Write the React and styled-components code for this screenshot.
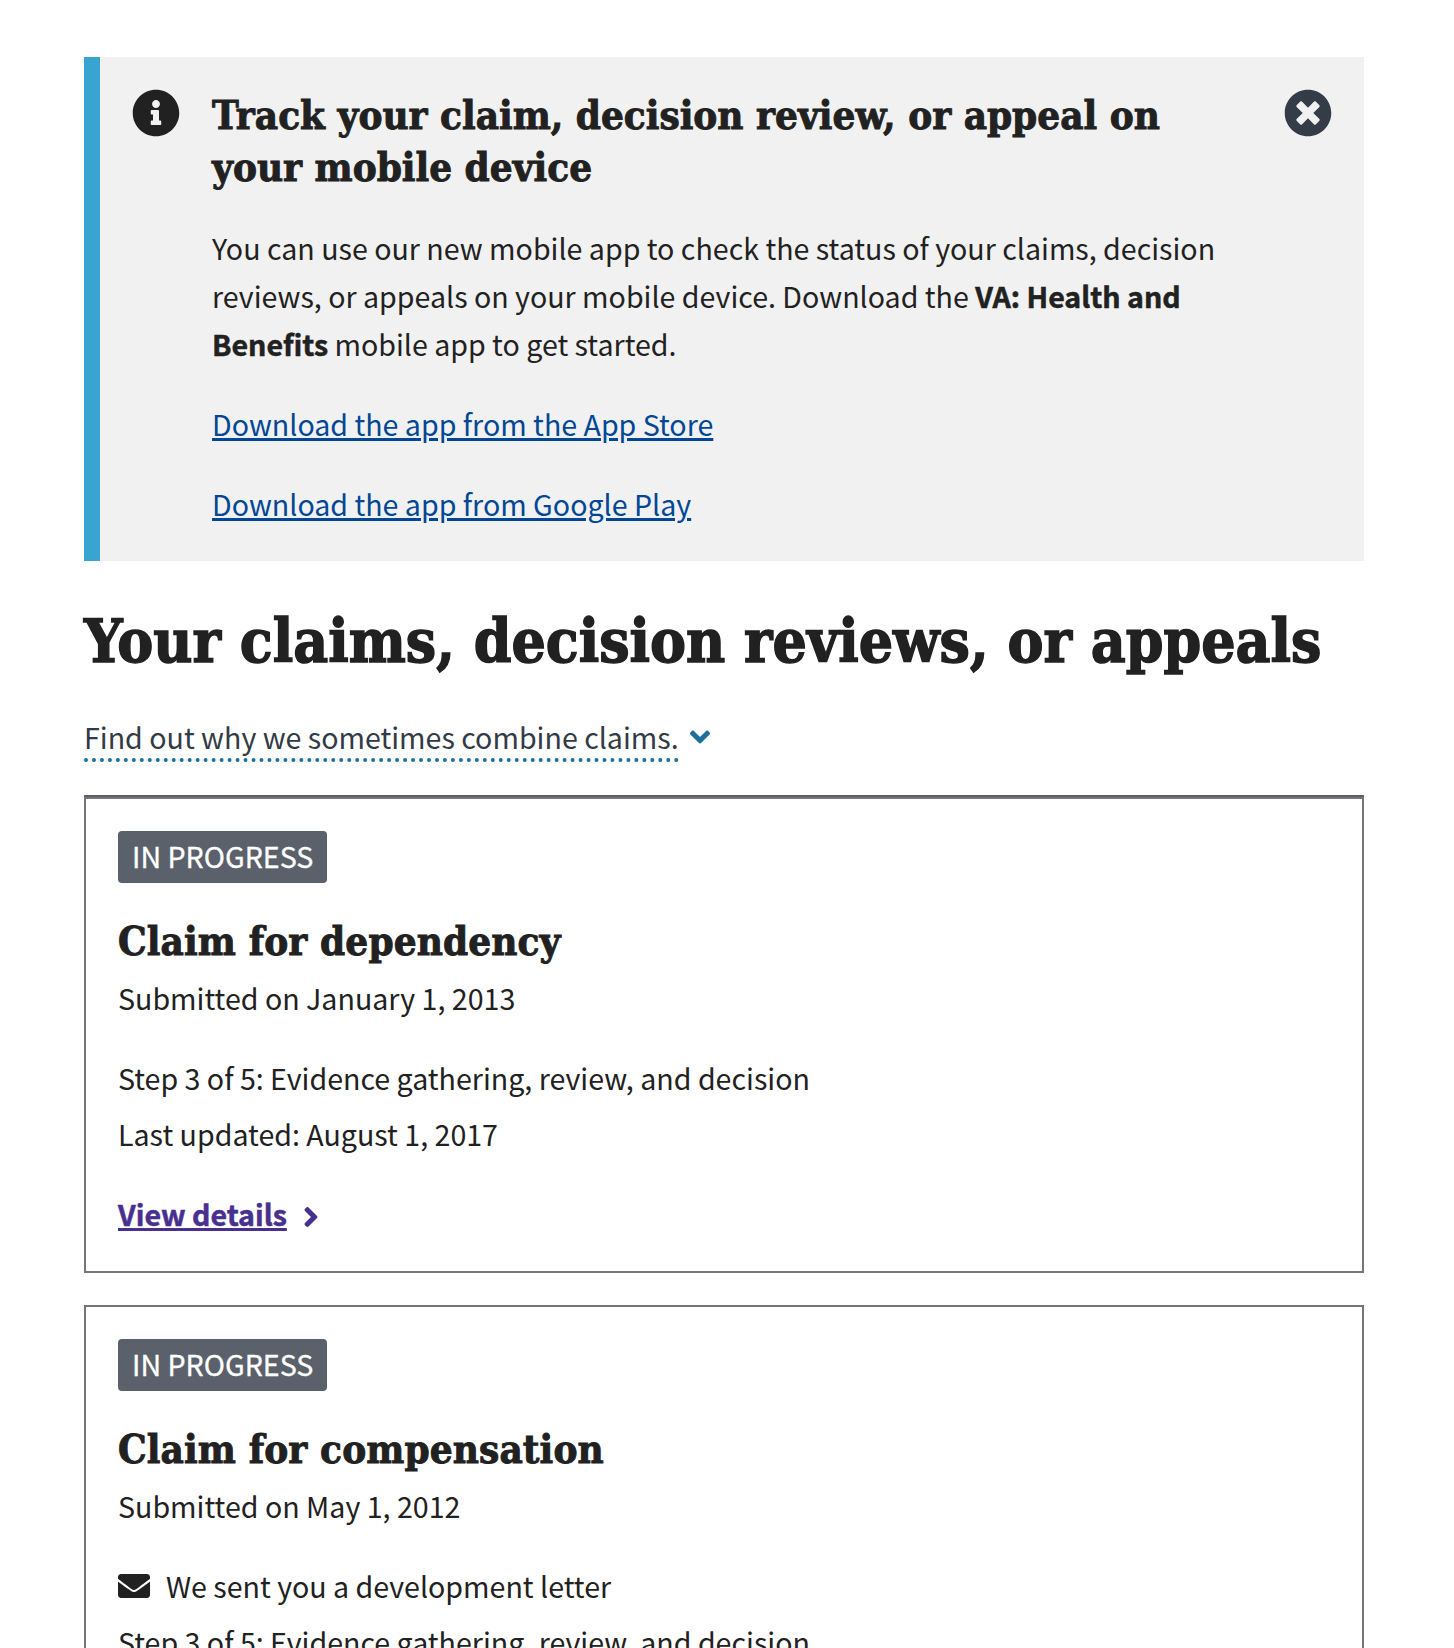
import React from "react";
import styled, { createGlobalStyle } from "styled-components";
import {
  FaInfoCircle,
  FaTimesCircle,
  FaAngleDown,
  FaAngleRight,
  FaEnvelope,
} from "react-icons/fa";

const GlobalStyle = createGlobalStyle`
  *, *::before, *::after { box-sizing: border-box; }
  body {
    margin: 0;
    background: #fff;
    color: #212121;
    font-family: "Noto Sans CJK SC", "Open Sans", sans-serif;
    font-size: 28.6px;
    line-height: 48px;
  }
  h1, h2, h3, p { margin: 0; }
  b { -webkit-text-stroke: 0.5px currentColor; }
`;

const Page = styled.main`
  height: 1648px;
  overflow: hidden;
  padding: 57px 90px 0 84px;
`;

const Title = styled.h1`
  margin-top: 41px;
  font: 700 60px/78px "DejaVu Serif Condensed", "DejaVu Serif", serif;
  font-stretch: condensed;
  -webkit-text-stroke: 1.4px currentColor;
  white-space: nowrap;
`;

const Subtitle = styled.h2`
  font: 700 40px/52px "DejaVu Serif Condensed", "DejaVu Serif", serif;
  font-stretch: condensed;
  -webkit-text-stroke: 0.9px currentColor;
`;

const Alert = styled.section`
  display: flex;
  gap: 32px;
  height: 504px;
  padding: 32px;
  border-left: 16px solid #38a4d0;
  background: #f1f1f1;
`;

const InfoIcon = styled(FaInfoCircle)`
  flex: none;
  width: 48px;
  height: 48px;
  margin-top: -0.5px;
`;

const AlertBody = styled.div`
  flex: 1;
  display: flex;
  flex-direction: column;
  align-items: flex-start;
  gap: 32px;

  ${Subtitle} {
    margin-bottom: -1px;
  }
`;

const CloseButton = styled.button`
  flex: none;
  width: 48px;
  height: 48px;
  margin-top: -0.5px;
  margin-left: 8px;
  padding: 0;
  border: 0;
  background: none;
  color: #343c47;
  cursor: pointer;

  svg {
    display: block;
    width: 48px;
    height: 48px;
  }
`;

const Link = styled.a`
  color: #004795;
  text-decoration: underline;
  text-decoration-thickness: 3px;
  text-underline-offset: 2px;
`;

const Expander = styled.button`
  display: flex;
  align-items: flex-start;
  gap: 11px;
  margin-top: 34px;
  padding: 0;
  border: 0;
  background: none;
  font: inherit;
  color: #323a45;
  cursor: pointer;
`;

const ExpanderLabel = styled.span`
  height: 48px;
  padding-top: 1px;
  line-height: 43px;
  border-bottom: 4px dotted #1d6f9c;
`;

const ExpanderIcon = styled(FaAngleDown)`
  width: 20px;
  height: 32px;
  margin-top: 7px;
  color: #1d6f9c;
`;

const Divider = styled.hr`
  height: 2px;
  margin: 33px 0 0;
  border: 0;
  background: #5c5e6a;
`;

const CardList = styled.div`
  display: flex;
  flex-direction: column;
  gap: 32px;
`;

const Card = styled.article`
  display: flex;
  flex-direction: column;
  align-items: flex-start;
  padding: 32px 32px 33px;
  border: 2px solid #757575;
`;

const Badge = styled.span`
  height: 52px;
  margin-bottom: 32px;
  padding: 1px 14px 0;
  border-radius: 4px;
  background: #5b616b;
  color: #fff;
  -webkit-text-stroke: 0.3px currentColor;
  white-space: nowrap;
`;

const Submitted = styled.p`
  margin-top: 7px;
`;

const Details = styled.div`
  display: flex;
  flex-direction: column;
  gap: 8px;
  margin: 32px 0;
`;

const Notice = styled.p`
  display: flex;
  align-items: center;
  gap: 16px;
`;

const MailIcon = styled(FaEnvelope)`
  width: 32px;
  height: 32px;
`;

const ClaimTitle = styled(Subtitle)`
  letter-spacing: 0.12px;
`;

const DetailsLink = styled.a`
  display: flex;
  gap: 16px;
  color: #48308f;
  font-weight: 700;
  text-decoration: none;

  span {
    text-decoration: underline;
    text-decoration-thickness: 3px;
    text-underline-offset: 2px;
    -webkit-text-stroke: 0.5px currentColor;
  }

  svg {
    width: 16px;
    height: 32px;
    margin-top: 11px;
  }
`;

const claims = [
  { name: "dependency", submitted: "January 1, 2013", updated: "August 1, 2017" },
  { name: "compensation", submitted: "May 1, 2012", letter: true },
];

function ClaimCard({ name, submitted, updated, letter }) {
  return (
    <Card>
      <Badge>IN PROGRESS</Badge>
      <ClaimTitle as="h3">Claim for {name}</ClaimTitle>
      <Submitted>Submitted on {submitted}</Submitted>
      <Details>
        {letter && (
          <Notice>
            <MailIcon />
            We sent you a development letter
          </Notice>
        )}
        <p>Step 3 of 5: Evidence gathering, review, and decision</p>
        {updated && <p>Last updated: {updated}</p>}
      </Details>
      {updated && (
        <DetailsLink href="#">
          <span>View details</span>
          <FaAngleRight />
        </DetailsLink>
      )}
    </Card>
  );
}

export default function App() {
  return (
    <>
      <GlobalStyle />
      <Page>
        <Alert>
          <InfoIcon />
          <AlertBody>
            <Subtitle>
              Track your claim, decision review, or appeal on
              <br />
              your mobile device
            </Subtitle>
            <p>
              You can use our new mobile app to check the status of your claims, decision
              <br />
              reviews, or appeals on your mobile device. Download the <b>VA: Health and</b>
              <br />
              <b>Benefits</b> mobile app to get started.
            </p>
            <Link href="#">Download the app from the App Store</Link>
            <Link href="#">Download the app from Google Play</Link>
          </AlertBody>
          <CloseButton aria-label="Close">
            <FaTimesCircle />
          </CloseButton>
        </Alert>
        <Title>Your claims, decision reviews, or appeals</Title>
        <Expander>
          <ExpanderLabel>Find out why we sometimes combine claims.</ExpanderLabel>
          <ExpanderIcon />
        </Expander>
        <Divider />
        <CardList>
          {claims.map((claim) => (
            <ClaimCard key={claim.name} {...claim} />
          ))}
        </CardList>
      </Page>
    </>
  );
}
